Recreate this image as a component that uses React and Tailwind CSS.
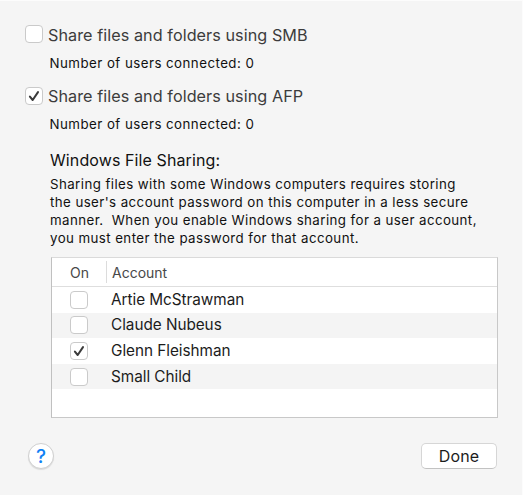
const accounts = [
  { name: 'Artie McStrawman', on: false },
  { name: 'Claude Nubeus', on: false },
  { name: 'Glenn Fleishman', on: true },
  { name: 'Small Child', on: false },
];

function Checkbox({ checked = false }) {
  return (
    <span
      role="checkbox"
      aria-checked={checked}
      className="flex size-[18px] shrink-0 items-center justify-center rounded-[4px] border border-[#cacaca] bg-white"
    >
      {checked && (
        <svg viewBox="0 0 16 16" className="size-4 shrink-0" fill="none" stroke="#3a3a3a" strokeWidth="2" strokeLinecap="round" strokeLinejoin="round">
          <path d="M3.9 8.6 6.7 12 12 4.1" />
        </svg>
      )}
    </span>
  );
}

function Service({ label, checked }) {
  return (
    <section>
      <div className="flex h-[18px] items-center gap-[5px]">
        <Checkbox checked={checked} />
        <span className="pt-px text-[16.2px] leading-[18px] tracking-[0.06px] whitespace-nowrap text-[#3c3c3c]">{label}</span>
      </div>
      <p className="mt-[10.5px] pl-[24.5px] text-[13.3px] leading-[18px] tracking-[0.46px] text-[#111111]">
        Number of users connected: 0
      </p>
    </section>
  );
}

export default function App() {
  return (
    <main className="h-[495px] w-[523px] overflow-hidden border-t border-r border-[#fcfcfc] bg-[#f5f5f5] pt-6 pl-[25px] font-['Inter',sans-serif]">
      <div className="flex h-[123px] flex-col gap-[15.3px]">
        <Service label="Share files and folders using SMB" />
        <Service label="Share files and folders using AFP" checked />
      </div>

      <section className="ml-[25px] whitespace-pre text-[#111111]">
        <h2 className="pt-[2px] text-[16px] leading-5 tracking-[0.1px]">Windows File Sharing:</h2>
        <div className="mt-[5px] text-[13.3px] leading-[18px] tracking-[0.42px]">
          <p>Sharing files with some Windows computers requires storing</p>
          <p>the user's account password on this computer in a less secure</p>
          <p>manner.  When you enable Windows sharing for a user account,</p>
          <p>you must enter the password for that account.</p>
        </div>
      </section>

      <div className="mt-[10px] ml-[26px] h-[161px] w-[447px] border border-t-[#dadada] border-r-[#c8c8c8] border-b-[#c8c8c8] border-l-[#c0c0c0] bg-white">
        <div className="flex h-[29px] items-center border-b border-[#dedede] text-[14px] text-[#484848]">
          <div className="flex h-[22px] w-[55px] items-center border-r border-[#dcdcdc] pl-[18px]">On</div>
          <div className="pl-[5px]">Account</div>
        </div>
        {accounts.map((account) => (
          <div key={account.name} className="flex h-[25.6px] items-center pl-[18px] odd:bg-[#f4f4f4]">
            <Checkbox checked={account.on} />
            <span className="ml-[23px] text-[15.3px] leading-5 tracking-[-0.03px] text-[#1c1c1c]">{account.name}</span>
          </div>
        ))}
      </div>

      <footer className="mt-[25px] mr-[25px] flex items-center justify-between pl-[3px]">
        <button className="flex size-[26px] items-center justify-center rounded-full border border-[#d0d0d0] bg-white text-[19px] leading-none font-medium text-[#1080f5] shadow-[0_1px_1px_rgba(0,0,0,0.1)]">
          ?
        </button>
        <button className="flex h-[26px] w-[76px] items-center justify-center rounded-[5px] border border-[#d6d6d6] border-b-[#c2c2c2] bg-white text-[16px] tracking-[0.1px] text-[#1c1c1c]">
          Done
        </button>
      </footer>
    </main>
  );
}
